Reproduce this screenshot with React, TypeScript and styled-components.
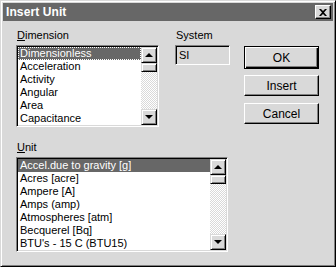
import React from 'react';
import styled, { createGlobalStyle } from 'styled-components';

const face = '#d9d9d9';
const shadow = '#808080';
const dark = '#676767';

const GlobalStyle = createGlobalStyle`
  html, body {
    margin: 0;
    padding: 0;
    background: ${face};
  }
  body {
    font-family: "Liberation Sans", Arial, sans-serif;
    font-size: 11px;
    color: #000;
  }
`;

const Window = styled.div`
  box-sizing: border-box;
  width: 336px;
  height: 267px;
  background: ${face};
  border: 1px solid;
  border-color: ${face} #000 #000 ${face};
  box-shadow: inset 1px 1px 0 #fff, inset -1px -1px 0 ${shadow};
  padding: 2px;
  display: flex;
  flex-direction: column;
`;

const TitleBar = styled.div`
  height: 18px;
  background: ${dark};
  display: flex;
  align-items: center;
  justify-content: space-between;
  padding: 0 2px 0 3px;
`;

const TitleText = styled.span`
  color: #fff;
  font-weight: bold;
  font-size: 12px;
  letter-spacing: 0.1px;
`;

const CloseButton = styled.div`
  box-sizing: border-box;
  width: 16px;
  height: 14px;
  background: ${face};
  border: 1px solid;
  border-color: #fff #000 #000 #fff;
  box-shadow: inset -1px -1px 0 ${shadow};
  display: flex;
  align-items: center;
  justify-content: center;
`;

const Body = styled.div`
  padding: 8px 0 0 13px;
  display: flex;
  flex-direction: column;
`;

const TopRow = styled.div`
  display: flex;
  align-items: flex-start;
`;

const Column = styled.div<{ $width: number; $left?: number; $top?: number }>`
  width: ${(p) => p.$width}px;
  margin-left: ${(p) => p.$left ?? 0}px;
  margin-top: ${(p) => p.$top ?? 0}px;
  display: flex;
  flex-direction: column;
`;

const Label = styled.div`
  height: 12px;
  line-height: 12px;
  padding-left: 1px;
  margin-bottom: 4px;
  u {
    text-decoration: underline;
    text-underline-offset: 1px;
  }
`;

const Sunken = styled.div<{ $height: number; $bg?: string }>`
  box-sizing: border-box;
  height: ${(p) => p.$height}px;
  border: 1px solid;
  border-color: ${shadow} #fff #fff ${shadow};
  box-shadow: inset 1px 1px 0 #000, inset -1px -1px 0 ${face};
  background: ${(p) => p.$bg ?? '#fff'};
  padding: 1px;
  display: flex;
`;

const Items = styled.div`
  flex: 1;
  overflow: hidden;
`;

const Item = styled.div<{ $selected?: boolean; $focus?: boolean }>`
  height: 13px;
  line-height: 13px;
  padding-left: 2px;
  white-space: nowrap;
  box-sizing: border-box;
  background: ${(p) => (p.$selected ? dark : 'transparent')};
  color: ${(p) => (p.$selected ? '#fff' : '#000')};
  outline: ${(p) => (p.$focus ? '1px dotted #fff' : 'none')};
  outline-offset: -1px;
`;

const ScrollBar = styled.div`
  width: 16px;
  display: flex;
  flex-direction: column;
  background: repeating-conic-gradient(#fff 0 25%, ${face} 0 50%) 0 0 / 2px 2px;
`;

const ScrollBtn = styled.div<{ $height?: number }>`
  box-sizing: border-box;
  height: ${(p) => p.$height ?? 16}px;
  background: ${face};
  border: 1px solid;
  border-color: ${face} #000 #000 ${face};
  box-shadow: inset 1px 1px 0 #fff, inset -1px -1px 0 ${shadow};
  display: flex;
  align-items: center;
  justify-content: center;
`;

const Track = styled.div`
  flex: 1;
`;

const Arrow = styled.div<{ $down?: boolean }>`
  width: 0;
  height: 0;
  border-left: 4px solid transparent;
  border-right: 4px solid transparent;
  ${(p) =>
    p.$down ? 'border-top: 4px solid #000;' : 'border-bottom: 4px solid #000;'}
`;

const FieldText = styled.div`
  padding: 2px 0 0 2px;
  line-height: 13px;
`;

const Button = styled.div<{ $default?: boolean }>`
  box-sizing: border-box;
  height: ${(p) => (p.$default ? 23 : 21)}px;
  margin-bottom: ${(p) => (p.$default ? 6 : 7)}px;
  background: ${face};
  border: 1px solid;
  border-color: ${(p) => (p.$default ? '#000' : `#fff #000 #000 #fff`)};
  box-shadow: ${(p) =>
    p.$default
      ? `inset 1px 1px 0 #fff, inset -1px -1px 0 #000, inset -2px -2px 0 ${shadow}`
      : `inset -1px -1px 0 ${shadow}`};
  display: flex;
  align-items: center;
  justify-content: center;
  font-size: 12px;
`;

const UnitSection = styled.div`
  margin-top: 10px;
  width: 212px;
  display: flex;
  flex-direction: column;
`;

const dimensions = [
  'Dimensionless',
  'Acceleration',
  'Activity',
  'Angular',
  'Area',
  'Capacitance',
];

const units = [
  'Accel.due to gravity [g]',
  'Acres [acre]',
  'Ampere [A]',
  'Amps (amp)',
  'Atmospheres [atm]',
  'Becquerel [Bq]',
  "BTU's - 15 C (BTU15)",
];

const ListBox: React.FC<{ items: string[]; height: number; focus?: boolean }> = ({
  items,
  height,
  focus,
}) => (
  <Sunken $height={height}>
    <Items>
      {items.map((name, i) => (
        <Item key={name} $selected={i === 0} $focus={focus && i === 0}>
          {name}
        </Item>
      ))}
    </Items>
    <ScrollBar>
      <ScrollBtn>
        <Arrow />
      </ScrollBtn>
      <ScrollBtn $height={9} />
      <Track />
      <ScrollBtn>
        <Arrow $down />
      </ScrollBtn>
    </ScrollBar>
  </Sunken>
);

export default function App() {
  return (
    <>
      <GlobalStyle />
      <Window>
        <TitleBar>
          <TitleText>Insert Unit</TitleText>
          <CloseButton>
            <svg width="8" height="7" viewBox="0 0 8 7">
              <path
                d="M0 0h2l2 2 2-2h2L5 3.5 8 7H6L4 5 2 7H0l3-3.5z"
                fill="#000"
              />
            </svg>
          </CloseButton>
        </TitleBar>
        <Body>
          <TopRow>
            <Column $width={143}>
              <Label>
                <u>D</u>imension
              </Label>
              <ListBox items={dimensions} height={82} focus />
            </Column>
            <Column $width={55} $left={16}>
              <Label>System</Label>
              <Sunken $height={20} $bg={face}>
                <FieldText>SI</FieldText>
              </Sunken>
            </Column>
            <Column $width={75} $left={14} $top={17}>
              <Button $default>OK</Button>
              <Button>Insert</Button>
              <Button>Cancel</Button>
            </Column>
          </TopRow>
          <UnitSection>
            <Label>
              <u>U</u>nit
            </Label>
            <ListBox items={units} height={95} />
          </UnitSection>
        </Body>
      </Window>
    </>
  );
}
